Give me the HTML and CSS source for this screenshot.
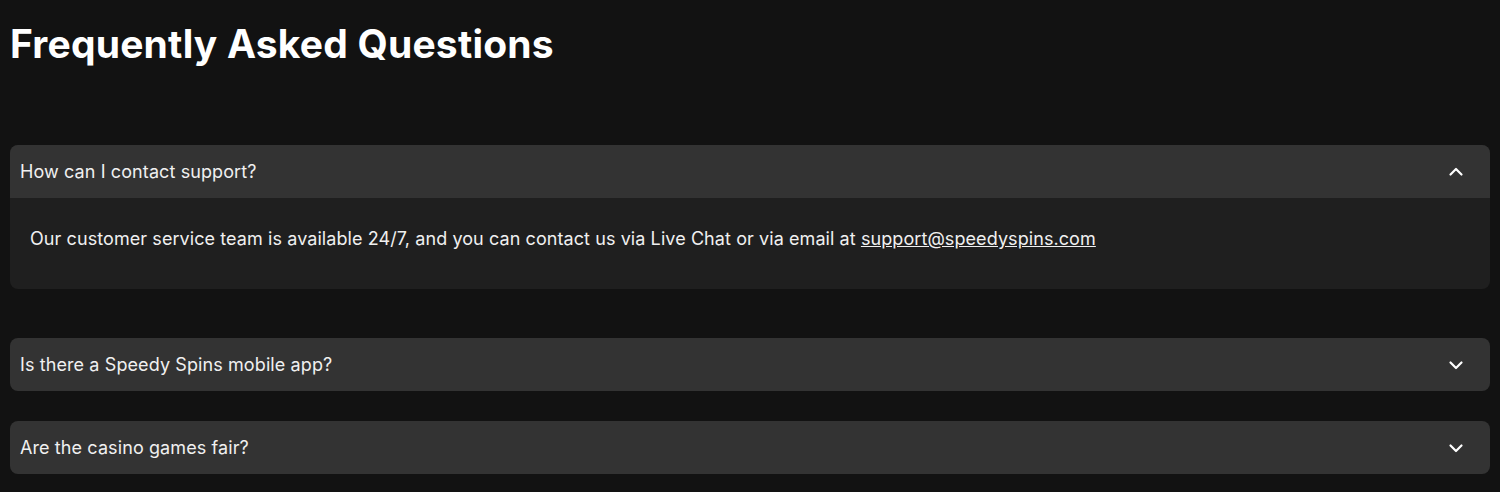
FILE: index.html
```html
<!DOCTYPE html>
<html lang="en">
<head>
<meta charset="utf-8">
<title>FAQ</title>
<link rel="stylesheet" href="styles.css">
</head>
<body>
<main class="faq">
  <h1 class="faq-title">Frequently Asked Questions</h1>
  <div class="faq-list">
    <section class="item open">
      <div class="item-head">
        <span class="q">How can I contact support?</span>
        <svg class="chev" viewBox="0 0 16 16" width="16" height="16"><path d="M2.5 10.5 L8 5 L13.5 10.5" fill="none" stroke="#fff" stroke-width="2.2" stroke-linecap="round" stroke-linejoin="round"/></svg>
      </div>
      <div class="item-body">
        <p>Our customer service team is available 24/7, and you can contact us via Live Chat or via email at <a href="#">support@speedyspins.com</a></p>
      </div>
    </section>
    <section class="item">
      <div class="item-head">
        <span class="q">Is there a Speedy Spins mobile app?</span>
        <svg class="chev" viewBox="0 0 16 16" width="16" height="16"><path d="M2.5 5.5 L8 11 L13.5 5.5" fill="none" stroke="#fff" stroke-width="2.2" stroke-linecap="round" stroke-linejoin="round"/></svg>
      </div>
    </section>
    <section class="item">
      <div class="item-head">
        <span class="q">Are the casino games fair?</span>
        <svg class="chev" viewBox="0 0 16 16" width="16" height="16"><path d="M2.5 5.5 L8 11 L13.5 5.5" fill="none" stroke="#fff" stroke-width="2.2" stroke-linecap="round" stroke-linejoin="round"/></svg>
      </div>
    </section>
  </div>
</main>
</body>
</html>
```
FILE: styles.css
```css
html, body {
  margin: 0;
  padding: 0;
  background: #121212;
  color: #f2f2f2;
  font-family: "Inter", "Open Sans", sans-serif;
}
.faq {
  padding: 0 10px;
}
.faq-title {
  margin: 0;
  padding-top: 20px;
  font-size: 39px;
  line-height: 48px;
  font-weight: 700;
  color: #ffffff;
  letter-spacing: 0.2px;
}
.faq-list {
  margin-top: 77px;
  display: flex;
  flex-direction: column;
  gap: 30px;
}
.item {
  background: #1f1f1f;
  border-radius: 8px;
  overflow: hidden;
}
.item.open {
  margin-bottom: 19px;
}
.item-head {
  height: 53px;
  background: #333333;
  display: flex;
  align-items: center;
  justify-content: space-between;
  padding: 0 26px 0 10px;
}
.q {
  font-size: 18px;
  letter-spacing: 0.1px;
  color: #f0f0f0;
}
.chev {
  display: block;
}
.item-body {
  padding: 28px 20px 37px;
}
.item-body p {
  margin: 0;
  font-size: 18px;
  line-height: 26px;
  letter-spacing: 0.08px;
  color: #f0f0f0;
}
.item-body a {
  color: #f0f0f0;
  text-decoration: underline;
}
```
